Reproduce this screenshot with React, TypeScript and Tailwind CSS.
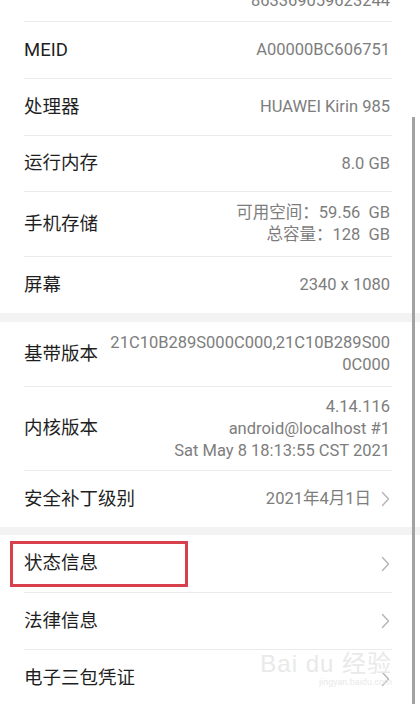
import React from "react";

const FONT = { fontFamily: 'Roboto, "Noto Sans CJK SC", "Noto Sans", sans-serif' };

function Chevron() {
  return (
    <svg width="9" height="16" viewBox="0 0 9 16" className="shrink-0">
      <path d="M1.5 1.5 L7.5 8 L1.5 14.5" fill="none" stroke="#b5b5b5" strokeWidth="1.4" strokeLinecap="round" strokeLinejoin="round" />
    </svg>
  );
}

function Divider() {
  return <div className="h-px bg-[#ebebeb] ml-[24px] mr-[28px]" />;
}

function Row({
  label,
  values,
  h,
  chevron,
}: {
  label: string;
  values?: string[];
  h: string;
  chevron?: boolean;
}) {
  return (
    <div className={`flex items-center justify-between pl-[24px] pr-[30px] ${h}`}>
      <span className="text-[18.5px] text-[#1f1f1f] whitespace-nowrap leading-none">{label}</span>
      <div className="flex items-center gap-[10px]">
        {values && (
          <div className="flex flex-col items-end text-[16.5px] text-[#7d7d7d] leading-[22px] text-right">
            {values.map((v, i) => (
              <span key={i} className="whitespace-pre">{v}</span>
            ))}
          </div>
        )}
        {chevron && <Chevron />}
      </div>
    </div>
  );
}

export default function App() {
  return (
    <div className="relative w-[420px] h-[704px] overflow-hidden bg-white" style={FONT}>
      <div className="h-[21px] flex justify-end pr-[30px]">
        <span className="text-[16.5px] text-[#7d7d7d] leading-[22px] -mt-[10px]">863369059623244</span>
      </div>
      <Divider />
      <Row label="MEID" values={["A00000BC606751"]} h="h-[56px]" />
      <Divider />
      <Row label="处理器" values={["HUAWEI Kirin 985"]} h="h-[56px]" />
      <Divider />
      <Row label="运行内存" values={["8.0 GB"]} h="h-[55px]" />
      <Divider />
      <Row label="手机存储" values={["可用空间：59.56  GB", "总容量：128  GB"]} h="h-[64px]" />
      <Divider />
      <Row label="屏幕" values={["2340 x 1080"]} h="h-[56px]" />
      <div className="h-[9px] bg-[#f3f3f3]" />
      <Row label="基带版本" values={["21C10B289S000C000,21C10B289S00", "0C000"]} h="h-[64px]" />
      <Divider />
      <Row
        label="内核版本"
        values={["4.14.116", "android@localhost #1", "Sat May 8 18:13:55 CST 2021"]}
        h="h-[83px]"
      />
      <Divider />
      <Row label="安全补丁级别" values={["2021年4月1日"]} h="h-[56px]" chevron />
      <div className="h-[8px] bg-[#f3f3f3]" />
      <div className="relative">
        <Row label="状态信息" h="h-[57px]" chevron />
        <div className="absolute left-[10px] top-[6px] w-[178px] h-[46px] border-[3px] border-[#d7404c]" />
      </div>
      <Divider />
      <Row label="法律信息" h="h-[56px]" chevron />
      <Divider />
      <div className="relative">
        <Row label="电子三包凭证" h="h-[57px]" chevron />
        <div className="absolute right-[28px] top-[2px] flex flex-col items-end leading-none text-[#e9e9e9] select-none">
          <span className="text-[24px] tracking-[1px]" style={{ fontFamily: '"Liberation Sans", "Noto Sans CJK SC", sans-serif' }}>Bai du 经验</span>
          <span className="text-[9px] mt-[2px]">jingyan.baidu.com</span>
        </div>
      </div>
      <div className="absolute left-[412px] top-[117px] bottom-0 w-[3px] bg-[#a2a2a2]" />
    </div>
  );
}
